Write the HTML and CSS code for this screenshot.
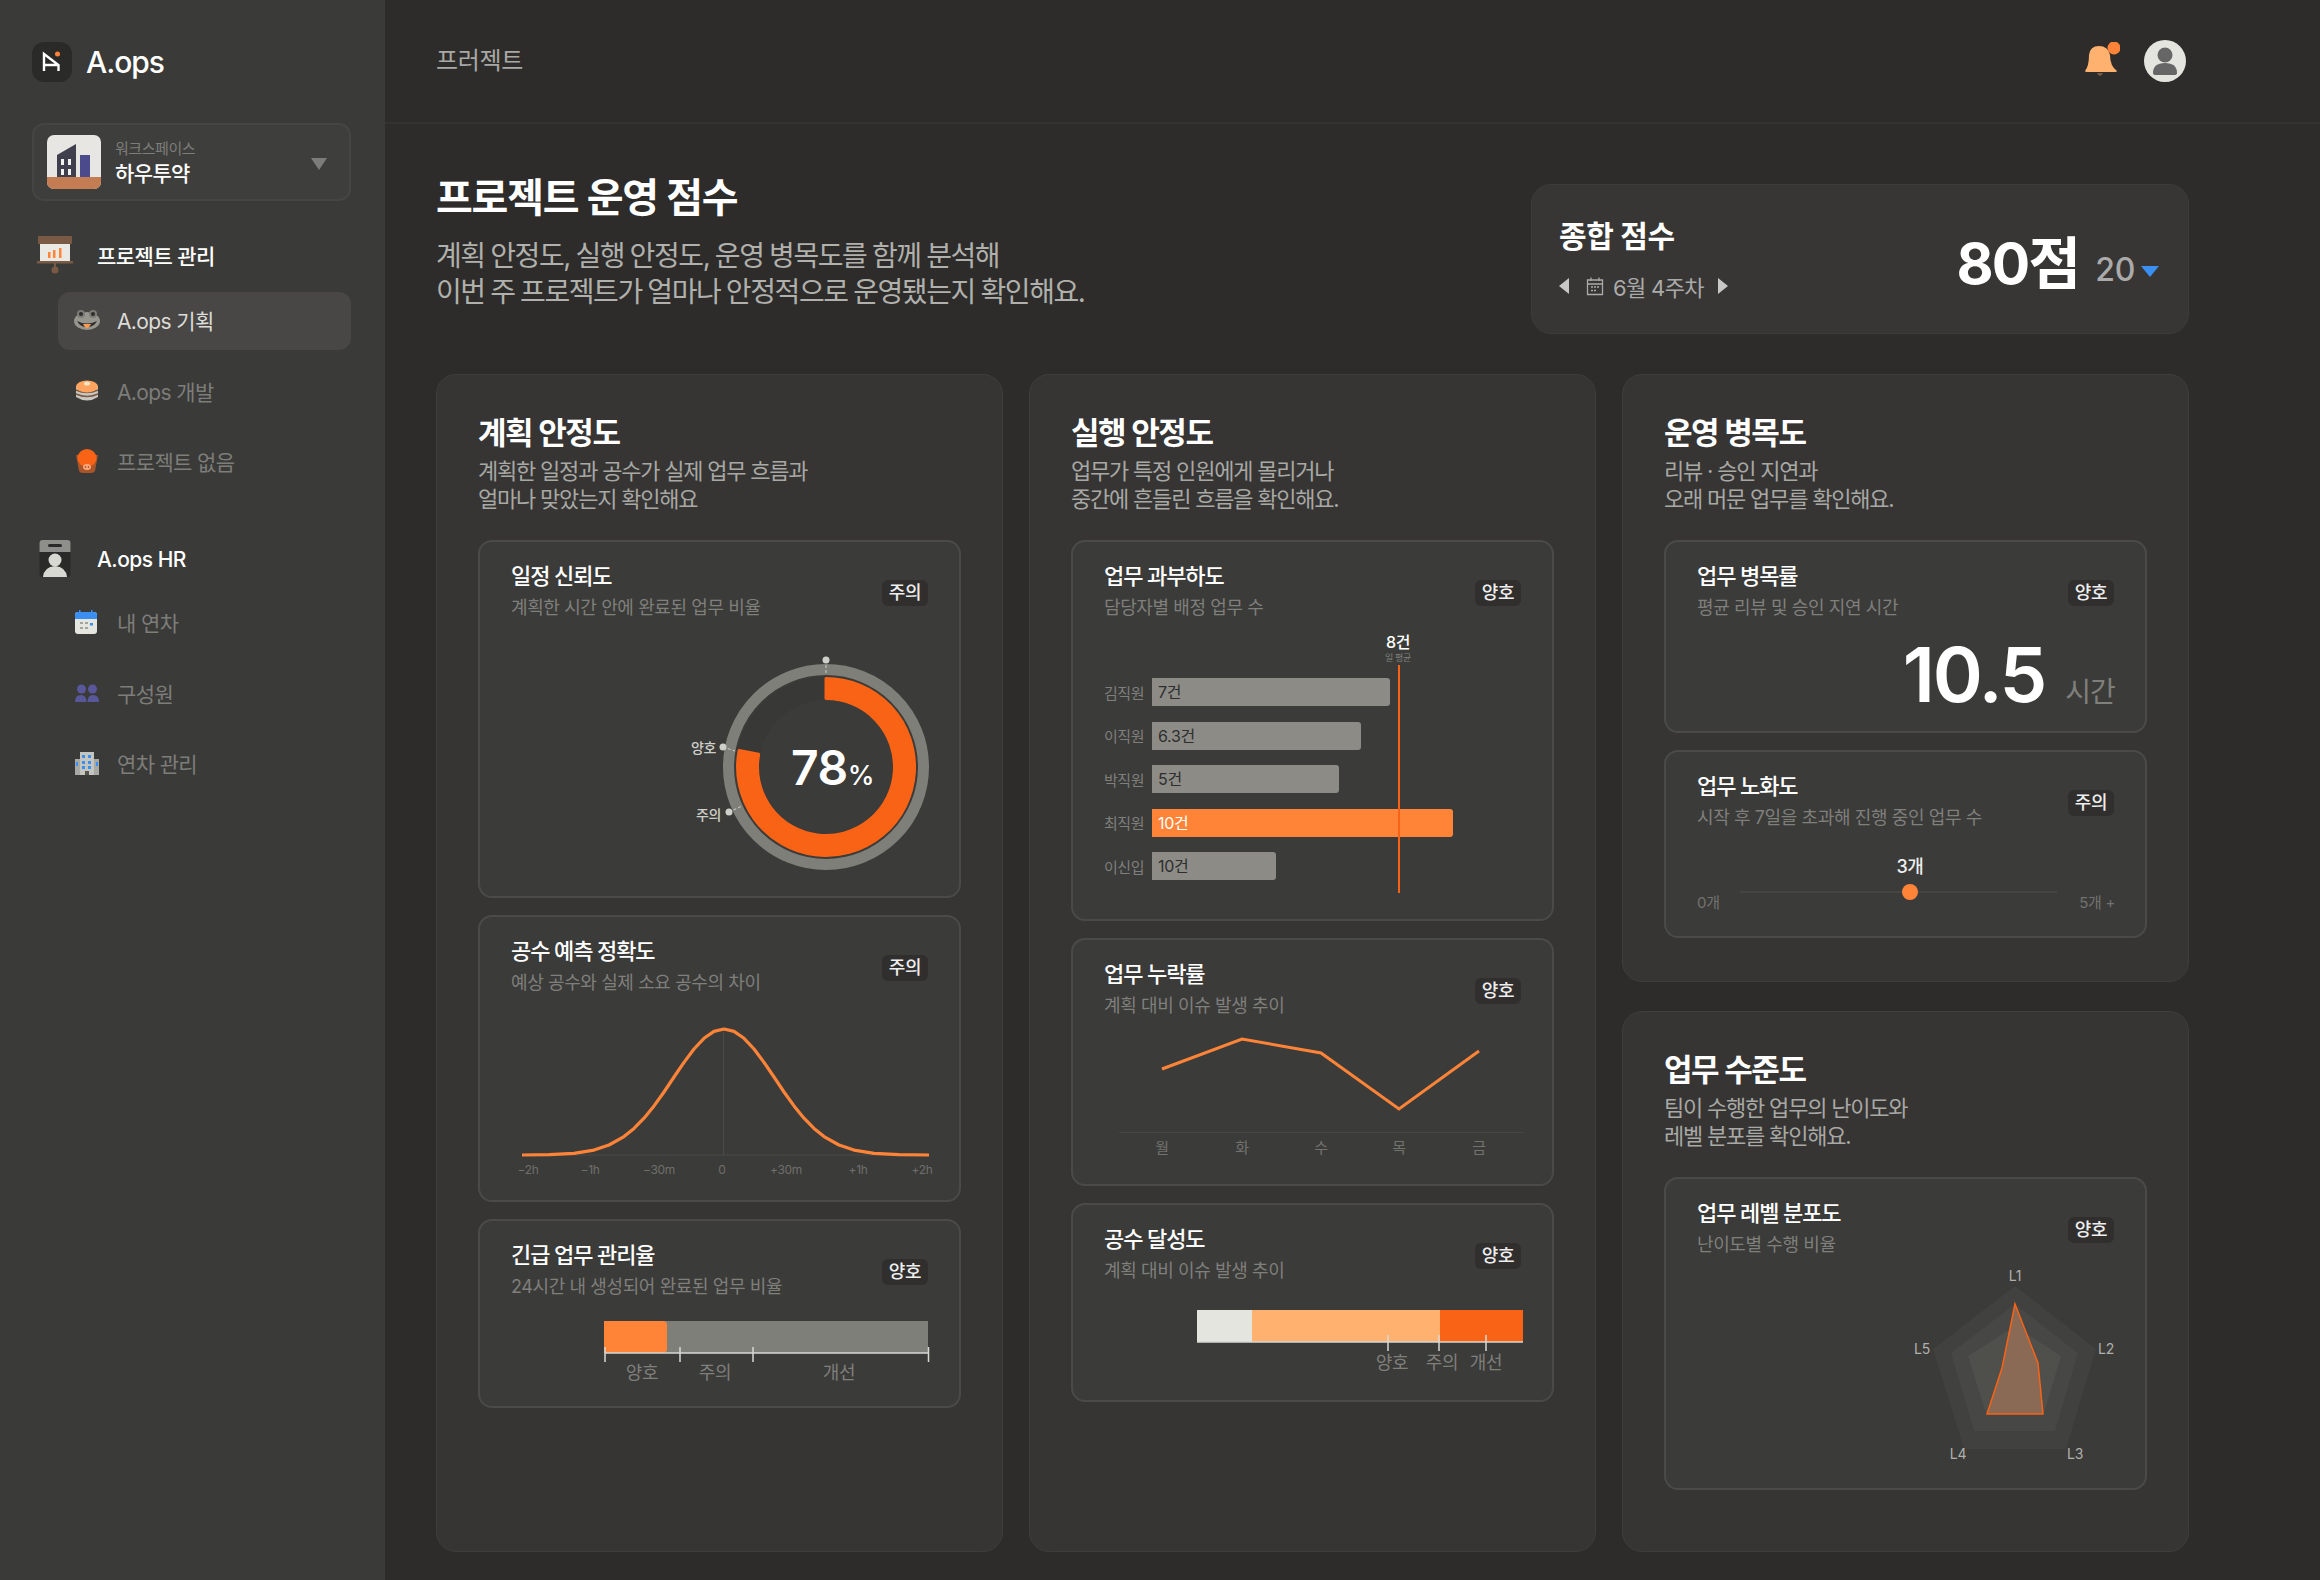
FILE: index.html
```html
<!DOCTYPE html>
<html lang="ko">
<head>
<meta charset="utf-8">
<title>A.ops</title>
<link rel="stylesheet" href="styles.css">
</head>
<body>
<div class="app">
  <aside class="sidebar">
    <div class="brand">
      <svg class="brand-mark" width="40" height="40" viewBox="0 0 40 40"><rect width="40" height="40" rx="12" fill="#2a2a29"/><path d="M12 29V12L26.500 23V29M12 23H26.500" fill="none" stroke="#fff" stroke-width="2.400"/><circle cx="25.500" cy="12" r="2.500" fill="#ff8438"/></svg>
      <span class="brand-name">A.ops</span>
    </div>
    <div class="workspace">
      <svg width="54" height="54" viewBox="0 0 54 54"><rect width="54" height="54" rx="7" fill="#e8e6e2"/><path d="M0 42H54V47A7 7 0 0 1 47 54H7A7 7 0 0 1 0 47Z" fill="#c47c52"/><path d="M10 20L29 9V42H10Z" fill="#3f3f4e"/><path d="M33 20H43V42H33Z" fill="#4b4a8c"/><g fill="#f2f2ee"><rect x="14" y="24" width="3" height="6"/><rect x="21" y="24" width="3" height="6"/><rect x="14" y="34" width="3" height="6"/><rect x="21" y="34" width="3" height="6"/></g></svg>
      <div class="workspace-text">
        <span class="workspace-label">워크스페이스</span>
        <span class="workspace-name">하우투약</span>
      </div>
      <svg class="workspace-caret" width="16" height="12" viewBox="0 0 16 12"><path d="M0 0H16L8 12Z" fill="#7c7c78"/></svg>
    </div>
    <nav class="nav-group">
      <div class="nav-head">
        <svg width="36" height="38" viewBox="0 0 36 38"><rect x="1" y="0" width="34" height="8" rx="1" fill="#7a5a45"/><rect x="3" y="8" width="30" height="17" fill="#e9e8e3"/><rect x="11" y="16" width="2.500" height="6" fill="#ff8438"/><rect x="16" y="14" width="2.500" height="8" fill="#ff8438"/><rect x="22" y="12" width="2.500" height="10" fill="#ff8438"/><rect x="0" y="25" width="36" height="2.500" fill="#7a5a45"/><rect x="17" y="27" width="2" height="5" fill="#7a5a45"/><circle cx="18" cy="34" r="3.500" fill="#7a5a45"/></svg>
        <span>프로젝트 관리</span>
      </div>
      <a class="nav-item is-active">
        <svg width="26" height="22" viewBox="0 0 26 22"><ellipse cx="13" cy="12" rx="13" ry="9" fill="#96968f"/><circle cx="7" cy="5" r="4" fill="#7c7c76"/><circle cx="19" cy="5" r="4" fill="#7c7c76"/><circle cx="7" cy="5" r="2" fill="#2c2c2b"/><circle cx="19" cy="5" r="2" fill="#2c2c2b"/><path d="M3 12Q13 17 23 12Q20 18 13 18Q6 18 3 12Z" fill="#2f2e2d"/><path d="M9 15H17Q15 19 13 19Q11 19 9 15Z" fill="#ff9a55"/></svg>
        <span>A.ops 기획</span>
      </a>
      <a class="nav-item">
        <svg width="24" height="22" viewBox="0 0 24 22"><path d="M1 6V17Q12 24 23 17V6Z" fill="#c9c7c0"/><path d="M1 10Q12 15 23 10M1 14Q12 19 23 14" fill="none" stroke="#7a5a45" stroke-width="1.500"/><ellipse cx="12" cy="6.500" rx="11" ry="6" fill="#ffa45e"/><ellipse cx="12" cy="3.500" rx="3" ry="2" fill="#f1e3c6"/></svg>
        <span>A.ops 개발</span>
      </a>
      <a class="nav-item">
        <svg width="24" height="24" viewBox="0 0 24 24"><path d="M1 6L4 22Q5 24 8 24H16Q19 24 20 22L23 6Z" fill="#a8552a"/><ellipse cx="12" cy="9" rx="9.500" ry="9" fill="#f96316"/><ellipse cx="12" cy="18" rx="4" ry="3" fill="#ffa77a"/><circle cx="10.500" cy="18" r="0.800" fill="#8a3b10"/><circle cx="13.500" cy="18" r="0.800" fill="#8a3b10"/></svg>
        <span>프로젝트 없음</span>
      </a>
    </nav>
    <nav class="nav-group nav-group-hr">
      <div class="nav-head">
        <svg width="36" height="38" viewBox="0 0 36 38"><rect x="2.500" y="0" width="31" height="37" rx="3" fill="#2a2a29"/><path d="M2.500 12V3A3 3 0 0 1 5.500 0H30.500A3 3 0 0 1 33.500 3V12Z" fill="#8e8e8a"/><rect x="11" y="4" width="14" height="3" rx="1.500" fill="#2a2a29"/><circle cx="18" cy="20" r="6.500" fill="#d8d8d3"/><path d="M6 37Q7 27 18 26Q29 27 30 37Z" fill="#d8d8d3"/></svg>
        <span>A.ops HR</span>
      </div>
      <a class="nav-item">
        <svg width="24" height="24" viewBox="0 0 24 24"><rect y="2" width="22" height="22" rx="3" fill="#e6e6e1"/><path d="M0 9V5A3 3 0 0 1 3 2H19A3 3 0 0 1 22 5V9Z" fill="#3b8ff0"/><rect x="4" y="0" width="1.500" height="3" fill="#3b8ff0"/><rect x="16" y="0" width="1.500" height="3" fill="#3b8ff0"/><g fill="#a5a5a0"><rect x="5" y="12" width="3" height="2"/><rect x="10" y="12" width="3" height="2"/><rect x="5" y="17" width="3" height="2"/><rect x="10" y="17" width="3" height="2"/></g><rect x="15" y="13" width="3" height="2.500" fill="#3b8ff0"/></svg>
        <span>내 연차</span>
      </a>
      <a class="nav-item">
        <svg width="24" height="18" viewBox="0 0 24 18"><g fill="#57579a"><circle cx="6.500" cy="5" r="4.500"/><circle cx="17.500" cy="5" r="4.500"/><path d="M0 18Q0 11 6 11Q11.500 11 11.500 18Z"/><path d="M12.500 18Q12.500 11 18 11Q24 11 24 18Z"/></g></svg>
        <span>구성원</span>
      </a>
      <a class="nav-item">
        <svg width="24" height="24" viewBox="0 0 24 24"><rect x="0" y="8" width="24" height="16" fill="#a8a8a4"/><rect x="5" y="1" width="14" height="23" fill="#c5c5c0"/><g fill="#3b8ff0"><rect x="7" y="4" width="3" height="3"/><rect x="13" y="4" width="3" height="3"/><rect x="7" y="10" width="3" height="3"/><rect x="13" y="10" width="3" height="3"/><rect x="7" y="15" width="3" height="3"/><rect x="13" y="15" width="3" height="3"/><rect x="1" y="11" width="2" height="4"/><rect x="21" y="11" width="2" height="4"/></g><rect x="10" y="20" width="4" height="4" fill="#55554f"/></svg>
        <span>연차 관리</span>
      </a>
    </nav>
  </aside>

  <div class="main">
    <header class="topbar">
      <span class="crumb">프러젝트</span>
      <div class="top-actions">
        <svg width="36" height="38" viewBox="0 0 36 38"><path d="M13 31Q16 37 19 31Z" fill="#7a5a45"/><path d="M1 29Q5 24 5 13Q6 4 15 4Q24 4 26 13Q26 24 33 29Q33 30 31 30H3Q1 30 1 29Z" fill="#ffb26f"/><circle cx="30" cy="6" r="6.500" fill="#ff8438"/></svg>
        <svg width="42" height="42" viewBox="0 0 42 42"><circle cx="21" cy="21" r="21" fill="#e5e5e0"/><circle cx="21" cy="15" r="7.500" fill="#666"/><path d="M9 33Q9 23 21 23Q33 23 33 33Q33 35 30 35H12Q9 35 9 33Z" fill="#666"/></svg>
      </div>
    </header>
    <main class="content">
      <section class="intro">
        <div>
          <h1 class="page-title">프로젝트 운영 점수</h1>
          <p class="page-desc">계획 안정도, 실행 안정도, 운영 병목도를 함께 분석해<br>이번 주 프로젝트가 얼마나 안정적으로 운영됐는지 확인해요.</p>
        </div>
        <div class="score">
          <div class="score-left">
            <div class="score-title">종합 점수</div>
            <div class="score-nav">
              <svg width="10" height="16" viewBox="0 0 10 16"><path d="M10 0V16L0 8Z" fill="#c8c8c4"/></svg>
              <svg class="score-cal" width="18" height="20" viewBox="0 0 18 20"><path d="M1.500 4H16.500V18.500H1.500ZM1.500 8H16.500M5 1.500V5M13 1.500V5" fill="none" stroke="#aaa" stroke-width="1.300"/><path d="M5 11H7M8 11H10M11 11H13M5 14.500H7M8 14.500H10" stroke="#aaa" stroke-width="1.500"/></svg>
              <span>6월 4주차</span>
              <svg class="score-next" width="10" height="16" viewBox="0 0 10 16"><path d="M0 0V16L10 8Z" fill="#c8c8c4"/></svg>
            </div>
          </div>
          <div class="score-value">
            <span class="score-big">80점</span>
            <span class="score-delta">20</span>
            <svg class="score-arrow" width="18" height="11" viewBox="0 0 18 11"><path d="M0 0H18L9 11Z" fill="#3b8ff0"/></svg>
          </div>
        </div>
      </section>

      <section class="columns">
        <article class="panel">
          <h2>계획 안정도</h2>
          <p class="panel-desc">계획한 일정과 공수가 실제 업무 흐름과<br>얼마나 맞았는지 확인해요</p>
          <div class="card h358">
            <div class="card-head"><div><h3>일정 신뢰도</h3><p>계획한 시간 안에 완료된 업무 비율</p></div><span class="badge">주의</span></div>
            <svg class="chart" width="479" height="248" viewBox="480 648 479 248">
              <circle cx="826" cy="767" r="78.500" fill="none" stroke="#383836" stroke-width="23"/>
              <circle cx="826" cy="767" r="97.500" fill="none" stroke="#7f7f79" stroke-width="11"/>
              <path d="M826 678.500A88.500 88.500 0 1 1 739.100 750.450L758.700 754.200A68.500 68.500 0 1 0 826 698.500Z" fill="#f96316" stroke="#f96316" stroke-width="3" stroke-linejoin="round"/>
              <path d="M826 660V675M723 747L735 751M729 812L742 806" stroke="#cfcfca" stroke-width="1" stroke-dasharray="3 2"/>
              <circle cx="826" cy="660" r="3.500" fill="#cfcfca"/><circle cx="723" cy="747" r="3.500" fill="#cfcfca"/><circle cx="729" cy="812" r="3.500" fill="#cfcfca"/>
              <text class="t-mark" x="716" y="753" text-anchor="end">양호</text>
              <text class="t-mark" x="721" y="820" text-anchor="end">주의</text>
              <text class="t-donut" x="791" y="785">78<tspan class="t-donut-unit">%</tspan></text>
            </svg>
          </div>
          <div class="card h287">
            <div class="card-head"><div><h3>공수 예측 정확도</h3><p>예상 공수와 실제 소요 공수의 차이</p></div><span class="badge">주의</span></div>
            <svg class="chart" width="479" height="190" viewBox="480 1010 479 190">
              <path d="M522 1155H929M723.500 1029V1155" stroke="#4a4a48" stroke-width="1" fill="none"/>
              <polyline fill="none" stroke="#ff8438" stroke-width="3.200" stroke-linejoin="round" points="522,1155 549,1154.600 574,1153.300 594,1150.100 609,1145 624,1136.600 634,1128.400 644,1118.200 654,1105.900 664,1092 674,1077 684,1062.400 694,1049 704,1038.300 714,1031.400 724,1029 734,1031.400 744,1038.300 754,1049 764,1062.400 774,1077 784,1092 794,1105.900 804,1118.200 814,1128.400 824,1136.600 839,1145 854,1150.100 874,1153.300 899,1154.600 929,1155"/>
              <g class="t-axis" text-anchor="middle"><text x="528" y="1174">−2h</text><text x="590" y="1174">−1h</text><text x="659" y="1174">−30m</text><text x="722" y="1174">0</text><text x="786" y="1174">+30m</text><text x="858" y="1174">+1h</text><text x="922" y="1174">+2h</text></g>
            </svg>
          </div>
          <div class="card h189">
            <div class="card-head"><div><h3>긴급 업무 관리율</h3><p>24시간 내 생성되어 완료된 업무 비율</p></div><span class="badge">양호</span></div>
            <svg class="chart" width="479" height="96" viewBox="480 1310 479 96">
              <rect x="604" y="1321" width="324" height="32" fill="#7f7f79"/>
              <path d="M604 1321H663Q667 1321 667 1325V1349Q667 1353 663 1353H604Z" fill="#ff8438"/>
              <path d="M605 1353H928.500M605 1347V1362M680 1347V1362M753 1347V1362M928.500 1347V1362" stroke="#d8d8d3" stroke-width="1.500" fill="none"/>
              <g class="t-scale" text-anchor="middle"><text x="642" y="1379">양호</text><text x="715" y="1379">주의</text><text x="839" y="1379">개선</text></g>
            </svg>
          </div>
        </article>

        <article class="panel">
          <h2>실행 안정도</h2>
          <p class="panel-desc">업무가 특정 인원에게 몰리거나<br>중간에 흔들린 흐름을 확인해요.</p>
          <div class="card h381">
            <div class="card-head"><div><h3>업무 과부하도</h3><p>담당자별 배정 업무 수</p></div><span class="badge">양호</span></div>
            <div class="hbars">
              <div class="hbar-row"><span class="hbar-name">김직원</span><div class="hbar" style="width:238px">7건</div></div>
              <div class="hbar-row"><span class="hbar-name">이직원</span><div class="hbar" style="width:209px">6.3건</div></div>
              <div class="hbar-row"><span class="hbar-name">박직원</span><div class="hbar" style="width:187px">5건</div></div>
              <div class="hbar-row"><span class="hbar-name">최직원</span><div class="hbar hbar-hot" style="width:301px">10건</div></div>
              <div class="hbar-row"><span class="hbar-name">이신입</span><div class="hbar" style="width:124px">10건</div></div>
              <div class="avg-line"></div>
              <div class="avg-label"><b>8건</b><small>일 평균</small></div>
            </div>
          </div>
          <div class="card h248">
            <div class="card-head"><div><h3>업무 누락률</h3><p>계획 대비 이슈 발생 추이</p></div><span class="badge">양호</span></div>
            <svg class="chart" width="479" height="159" viewBox="1073 1025 479 159">
              <path d="M1119 1132.500H1523" stroke="#464644" stroke-width="1"/>
              <polyline fill="none" stroke="#ff8438" stroke-width="3" points="1162,1069 1242,1039 1321,1053 1399,1109 1479,1051"/>
              <g class="t-day" text-anchor="middle"><text x="1162" y="1153">월</text><text x="1242" y="1153">화</text><text x="1321" y="1153">수</text><text x="1399" y="1153">목</text><text x="1479" y="1153">금</text></g>
            </svg>
          </div>
          <div class="card h199">
            <div class="card-head"><div><h3>공수 달성도</h3><p>계획 대비 이슈 발생 추이</p></div><span class="badge">양호</span></div>
            <svg class="chart" width="479" height="100" viewBox="1073 1300 479 100">
              <rect x="1197" y="1310" width="55" height="32" fill="#e5e5e0"/>
              <rect x="1252" y="1310" width="188" height="32" fill="#ffb26f"/>
              <rect x="1440" y="1310" width="83" height="32" fill="#f96316"/>
              <path d="M1197 1342H1523M1388 1335V1351M1439 1335V1351M1486 1335V1351" stroke="#d8d8d3" stroke-width="1.500" fill="none"/>
              <g class="t-scale" text-anchor="middle"><text x="1392" y="1369">양호</text><text x="1442" y="1369">주의</text><text x="1486" y="1369">개선</text></g>
            </svg>
          </div>
        </article>

        <div class="stack">
          <article class="panel panel-top">
            <h2>운영 병목도</h2>
            <p class="panel-desc">리뷰 · 승인 지연과<br>오래 머문 업무를 확인해요.</p>
            <div class="card h193">
              <div class="card-head"><div><h3>업무 병목률</h3><p>평균 리뷰 및 승인 지연 시간</p></div><span class="badge">양호</span></div>
              <div class="metric"><span class="metric-num">10.5</span><span class="metric-unit">시간</span></div>
            </div>
            <div class="card h188">
              <div class="card-head"><div><h3>업무 노화도</h3><p>시작 후 7일을 초과해 진행 중인 업무 수</p></div><span class="badge">주의</span></div>
              <svg class="chart" width="479" height="86" viewBox="1666 850 479 86">
                <path d="M1740 892H2057" stroke="#4a4a48" stroke-width="1.500"/>
                <circle cx="1910" cy="892" r="8" fill="#ff8438"/>
                <text class="t-slider" x="1910" y="873" text-anchor="middle">3개</text>
                <text class="t-slider-end" x="1697" y="908">0개</text>
                <text class="t-slider-end" x="2115" y="908" text-anchor="end">5개 +</text>
              </svg>
            </div>
          </article>
          <article class="panel panel-bottom">
            <h2>업무 수준도</h2>
            <p class="panel-desc">팀이 수행한 업무의 난이도와<br>레벨 분포를 확인해요.</p>
            <div class="card h313">
              <div class="card-head"><div><h3>업무 레벨 분포도</h3><p>난이도별 수행 비율</p></div><span class="badge">양호</span></div>
              <svg class="chart" width="479" height="225" viewBox="1666 1262 479 225">
                <polygon points="2015,1285 2096,1348 2066,1448 1964,1448 1933,1348" fill="#414140"/>
                <polygon points="2015,1303 2078,1352 2055,1430 1974,1430 1951,1352" fill="#474745"/>
                <polygon points="2015,1325 2061,1355 2044,1412 1986,1412 1968,1355" fill="#4f4f4c"/>
                <polygon points="2015,1303 2038,1362 2043,1413 1987,1413 2002,1367" fill="#8a6a55" stroke="#f96316" stroke-width="1.500"/>
                <g class="t-radar" text-anchor="middle"><text x="2015" y="1280">L1</text><text x="2106" y="1353">L2</text><text x="2075" y="1458">L3</text><text x="1958" y="1458">L4</text><text x="1922" y="1353">L5</text></g>
              </svg>
            </div>
          </article>
        </div>
      </section>
    </main>
  </div>
</div>
</body>
</html>
```

FILE: styles.css
```css
* { box-sizing: border-box; }
html, body { margin: 0; height: 100%; }
body {
  background: #2d2c2b;
  color: #fff;
  font-family: Inter, "Noto Sans CJK KR", sans-serif;
  letter-spacing: -0.02em;
  overflow: hidden;
}
h1, h2, h3, p { margin: 0; }

.app { display: flex; width: 2320px; height: 1580px; }

/* sidebar */
.sidebar { width: 385px; flex: none; background: #3a3a38; padding: 42px 34px 0 32px; }
.brand { display: flex; align-items: center; gap: 14px; height: 40px; }
.brand-name { font-size: 30px; font-weight: 500; letter-spacing: -0.035em; }
.workspace {
  display: flex; align-items: center; gap: 14px;
  height: 78px; margin-top: 41px; padding: 0 22px 0 13px;
  background: #3e3e3c; border: 2px solid #454543; border-radius: 12px;
}
.workspace-text { display: flex; flex-direction: column; flex: 1; padding-top: 2px; }
.workspace-label { font-size: 15px; line-height: 22px; color: #7d7d7a; letter-spacing: -0.03em; }
.workspace-name { font-size: 21px; line-height: 28px; font-weight: 500; letter-spacing: -0.03em; }
.workspace-caret { margin-top: 3px; }
.nav-group { margin-top: 34px; }
.nav-group-hr { margin-top: 49px; }
.nav-head { display: flex; align-items: center; gap: 24px; height: 40px; padding-left: 5px; font-size: 21px; font-weight: 500; margin-bottom: 17px; letter-spacing: -0.025em; }
.nav-group-hr .nav-head { margin-bottom: 14px; padding-bottom: 2px; }
.nav-item {
  display: flex; align-items: center; margin-left: 26px; height: 58px;
  margin-bottom: 12.500px; padding: 0 0 2px 16px; gap: 17px;
  font-size: 21px; color: #7d7d7a; border-radius: 12px; letter-spacing: -0.03em;
}
.nav-item svg { flex: none; width: 26px; }
.nav-item.is-active { background: #484745; color: #dcdcd8; }

/* main */
.main { flex: 1; min-width: 0; }
.topbar {
  display: flex; justify-content: space-between; align-items: center;
  height: 124px; padding: 0 134px 0 51px; border-bottom: 2px solid #343332;
}
.crumb { font-size: 24px; color: #a8a8a4; margin-bottom: 6px; }
.top-actions { display: flex; align-items: center; gap: 24px; }
.content { padding: 49px 131px 0 51px; }

.intro { display: flex; justify-content: space-between; align-items: flex-start; }
.page-title { font-size: 40px; line-height: 50px; font-weight: 700; letter-spacing: -0.03em; }
.page-desc { margin-top: 15px; font-size: 28px; line-height: 36px; color: #b0b0ac; letter-spacing: -0.05em; word-spacing: -1px; }
.score {
  display: flex; justify-content: space-between; align-items: center;
  width: 658px; height: 150px; margin-top: 11px; padding: 0 29px 0 27px;
  background: #373634; border: 1px solid #3d3c3b; border-radius: 20px;
}
.score-left { padding-bottom: 2px; }
.score-title { font-size: 30px; line-height: 40px; font-weight: 700; }
.score-nav { display: flex; align-items: center; height: 30px; margin-top: 15px; font-size: 22px; color: #aaa; letter-spacing: -0.03em; }
.score-cal { margin: 0 9px 0 17px; }
.score-next { margin-left: 14px; }
.score-value { display: flex; align-items: baseline; }
.score-big { font-size: 57px; font-weight: 700; letter-spacing: -0.03em; }
.score-delta { font-size: 32px; color: #aaa; margin: 0 6px 0 16px; font-weight: 500; transform: translateY(-3px); }
.score-arrow { transform: translateY(-7px); }

.columns { display: grid; grid-template-columns: repeat(3, 1fr); gap: 26px; height: 1178px; margin-top: 40px; }
.stack { display: flex; flex-direction: column; gap: 29px; min-width: 0; }
.panel {
  background: #363534; border: 1px solid #3f3e3d; border-radius: 20px;
  padding: 38px 41px 0; min-width: 0;
}
.panel-top { height: 608px; }
.panel-bottom { height: 541px; }
.panel h2 { font-size: 31px; line-height: 40px; font-weight: 700; letter-spacing: -0.045em; }
.panel-desc { margin: 4px 0 27px; font-size: 22px; line-height: 28px; color: #a8a8a4; letter-spacing: -0.055em; }

.card {
  display: flex; flex-direction: column;
  background: #3b3b39; border: 2px solid #4a4a48; border-radius: 14px;
  margin-bottom: 17px;
}
.h358 { height: 358px; } .h287 { height: 287px; } .h189 { height: 189px; }
.h381 { height: 381px; } .h248 { height: 248px; } .h199 { height: 199px; }
.h193 { height: 193px; } .h188 { height: 188px; } .h313 { height: 313px; }
.card-head { display: flex; justify-content: space-between; align-items: flex-start; padding: 19px 31px 0 31px; }
.card-head h3 { font-size: 22px; line-height: 30px; font-weight: 500; letter-spacing: -0.05em; }
.card-head p { margin-top: 4px; font-size: 18px; line-height: 26px; color: #7f7f7c; letter-spacing: -0.022em; }
.badge {
  margin-top: 19px; height: 26px; width: 46px; flex: none; text-align: center;
  background: #302f2e; border-radius: 6px; font-size: 18px; line-height: 26px; font-weight: 500; color: #eee;
}
.chart { display: block; margin-top: auto; overflow: hidden; border-radius: 0 0 12px 12px; }

/* chart text */
.t-mark { font-size: 14px; fill: #cfcfca; font-weight: 500; }
.t-donut { font-size: 48px; font-weight: 600; fill: #fff; letter-spacing: -0.01em; }
.t-donut-unit { font-size: 27px; font-weight: 500; }
.t-axis { font-size: 12px; fill: #6f6f6c; }
.t-scale { font-size: 18px; fill: #7f7f7c; }
.t-day { font-size: 15px; fill: #72726f; }
.t-slider { font-size: 18px; fill: #eee; font-weight: 500; }
.t-slider-end { font-size: 15px; fill: #72726f; }
.t-radar { font-size: 14px; fill: #b0b0ac; }

/* horizontal bars */
.hbars { position: relative; margin-top: auto; padding: 0 0 39px 31px; }
.hbar-row { display: flex; align-items: center; height: 28px; margin-bottom: 15.500px; }
.hbar-row:nth-child(5) { margin-bottom: 0; }
.hbar-name { width: 48px; flex: none; font-size: 15px; color: #7f7f7c; letter-spacing: -0.03em; }
.hbar { height: 28px; padding-left: 6px; background: #8c8b86; border-radius: 0 3px 3px 0; font-size: 16px; line-height: 28px; color: #2e2e2e; }
.hbar-hot { background: #ff8438; color: #fff; }
.avg-line { position: absolute; left: 325px; top: -13px; width: 2px; height: 228px; background: #f96316; }
.avg-label { position: absolute; left: 295px; top: -46px; width: 60px; text-align: center; }
.avg-label b { display: block; font-size: 16px; line-height: 20px; font-weight: 500; }
.avg-label small { display: block; font-size: 9px; line-height: 12px; color: #7f7f7c; }

.metric { display: flex; align-items: baseline; justify-content: flex-end; margin-top: auto; padding: 0 30px 15px 0; }
.metric-num { font-size: 76px; line-height: 84px; font-weight: 600; letter-spacing: -0.03em; }
.metric-unit { margin-left: 20px; font-size: 28px; color: #7f7f7c; letter-spacing: -0.03em; }
```
